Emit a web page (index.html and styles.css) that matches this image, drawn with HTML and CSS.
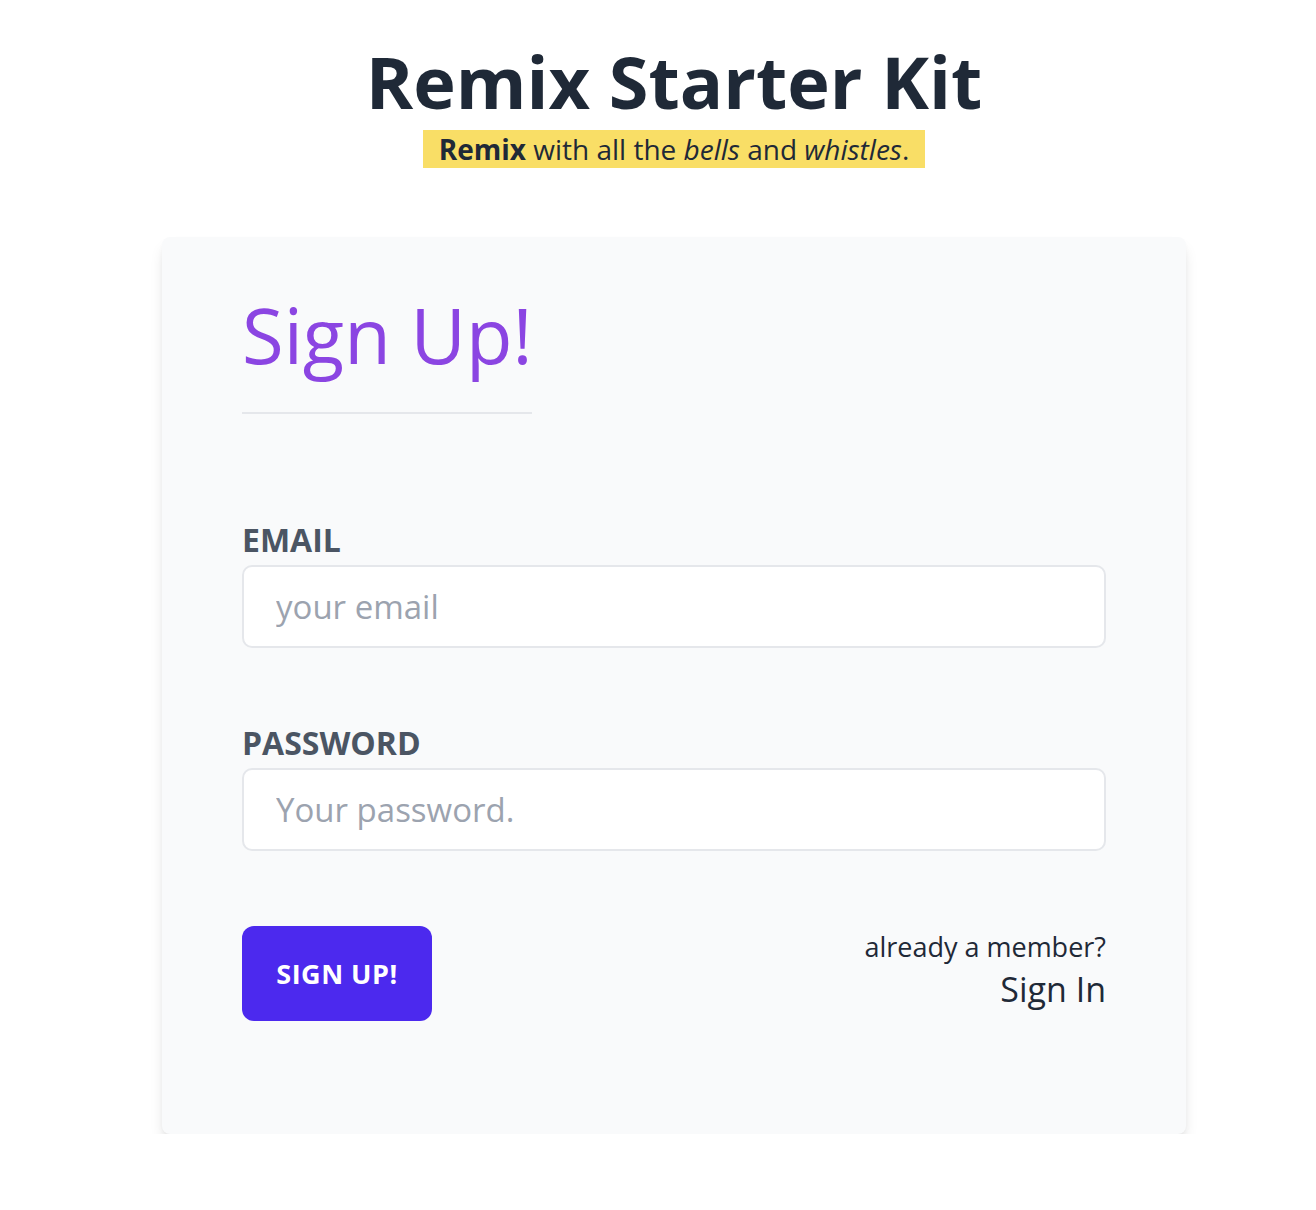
FILE: index.html
```html
<!DOCTYPE html>
<html lang="en">
<head>
  <meta charset="UTF-8">
  <meta name="viewport" content="width=device-width, initial-scale=1.0">
  <title>Sign Up - Remix Starter Kit</title>
  <link rel="stylesheet" href="styles.css">
</head>
<body>

  <header>
    <h1>Remix Starter Kit</h1>
    <p class="tagline"><strong>Remix</strong> with all the <em>bells</em> and <em>whistles</em>.</p>
  </header>

  <main class="card">
    <h2 class="card-title">Sign Up!</h2>

    <form class="signup-form" onsubmit="return false">
      <div class="field">
        <label for="email">EMAIL</label>
        <input type="email" id="email" name="email" placeholder="your email">
      </div>

      <div class="field">
        <label for="password">PASSWORD</label>
        <input type="password" id="password" name="password" placeholder="Your password.">
      </div>

      <div class="actions">
        <button type="submit" class="submit-btn">SIGN UP!</button>
        <div class="member">
          <p>already a member?</p>
          <a href="#">Sign In</a>
        </div>
      </div>
    </form>
  </main>

</body>
</html>
```

FILE: styles.css
```css
body {
  font-family: "Open Sans", sans-serif;
  background-color: #fff;
  color: #1f2937;
  margin: 0;
  padding: 0 0 0 32px;
}

header {
  text-align: center;
  padding-top: 42px;
}

header h1 {
  font-size: 72px;
  font-weight: 700;
  line-height: 78px;
  margin: 0;
  color: #1f2937;
}

.tagline {
  display: inline-block;
  margin: 10px 0 0;
  padding: 0 16px;
  background-color: #f9de66;
  font-size: 28px;
  line-height: 38px;
}

.card {
  box-sizing: border-box;
  width: 1024px;
  margin: 69px auto 0;
  padding: 53px 80px 113px;
  background-color: #f9fafb;
  border-radius: 8px;
  box-shadow: 0 10px 15px -3px rgba(0, 0, 0, 0.13), 0 4px 6px -2px rgba(0, 0, 0, 0.06);
}

.card-title {
  display: inline-block;
  margin: 0;
  padding-bottom: 32px;
  font-size: 76px;
  font-weight: 400;
  line-height: 90px;
  color: #8b45e2;
  border-bottom: 2px solid #e5e7eb;
}

.signup-form {
  margin-top: 106px;
}

.field {
  margin-bottom: 75px;
}

.field label {
  display: block;
  margin-bottom: 5px;
  font-size: 32px;
  font-weight: 700;
  line-height: 40px;
  color: #4b5563;
}

.field input {
  box-sizing: border-box;
  display: block;
  width: 100%;
  height: 83px;
  padding: 0 32px;
  border: 2px solid #e5e7eb;
  border-radius: 10px;
  background-color: #fff;
  font-family: inherit;
  font-size: 33px;
  color: #1f2937;
}

.field input::placeholder {
  color: #9ca3af;
}

.actions {
  display: flex;
  justify-content: space-between;
  align-items: flex-start;
}

.submit-btn {
  width: 190px;
  height: 95px;
  border: none;
  border-radius: 12px;
  background-color: #4c29ee;
  color: #fff;
  font-family: inherit;
  font-size: 27px;
  font-weight: 700;
  letter-spacing: 0.5px;
  cursor: pointer;
}

.member {
  text-align: right;
  padding-top: 4px;
}

.member p {
  margin: 0;
  font-size: 27px;
  line-height: 34px;
}

.member a {
  display: inline-block;
  margin-top: 3px;
  font-size: 34px;
  line-height: 44px;
  color: #1f2937;
  text-decoration: none;
}
```
